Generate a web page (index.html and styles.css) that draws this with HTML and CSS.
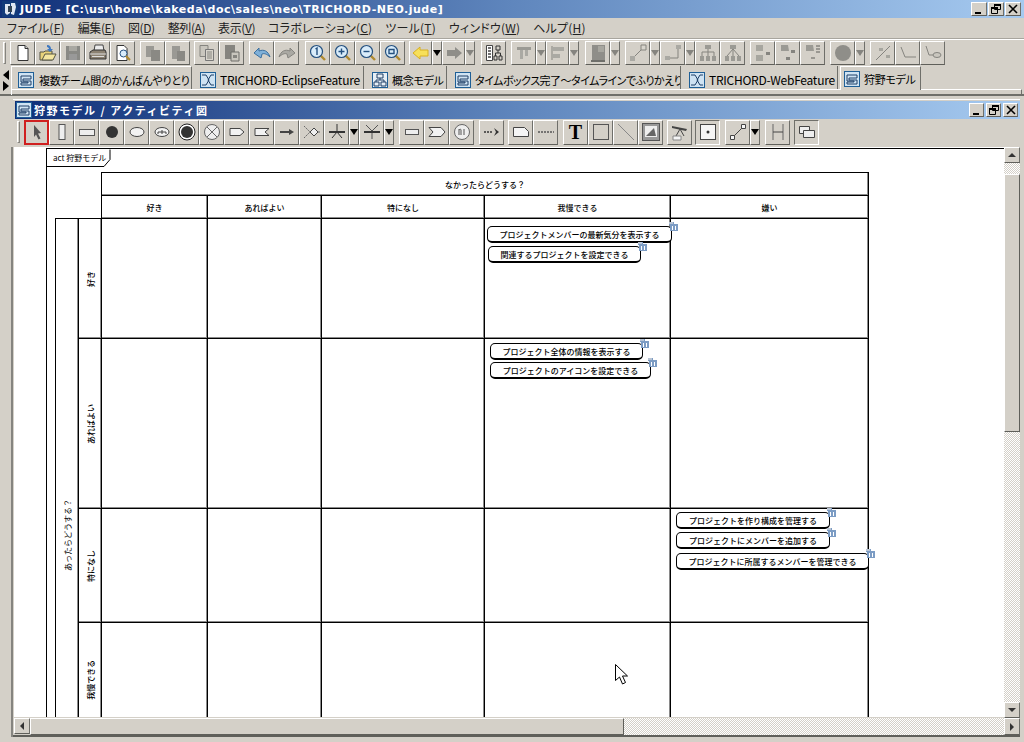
FILE: index.html
```html
<!DOCTYPE html>
<html lang="ja">

<head>
    <meta charset="UTF-8">
    <title>JUDE - [C:\usr\home\kakeda\doc\sales\neo\TRICHORD-NEO.jude]</title>
    <link rel="stylesheet" href="styles.css">
</head>

<body>
    <svg class="defs">
        <symbol id="tab-act" viewBox="0 0 16 16"><rect x=".5" y=".5" width="15" height="15" fill="#cfe3f3" stroke="#1f5f96"/><path d="M3 4h10v3H5v2h8v4H3v-2h7v-1H3z" fill="none" stroke="#1f3f66"/></symbol>
        <symbol id="tab-flow" viewBox="0 0 16 16"><rect x=".5" y=".5" width="15" height="15" fill="#cfe3f3" stroke="#1f5f96"/><path d="M2 3h4l3 5-3 5H2M14 3h-3L8 8l3 5h3" fill="none" stroke="#1f3f66"/></symbol>
        <symbol id="tab-cls" viewBox="0 0 16 16"><rect x=".5" y=".5" width="15" height="15" fill="#e6eff6" stroke="#1f5f96"/><path d="M5 2h6v4H5zM2 10h5v4H2zM9 10h5v4H9zM8 6v2M4 10V8h8v2" fill="none" stroke="#1f3f66"/></symbol>
        <symbol id="note" viewBox="0 0 9 9"><path d="M0 0h5v2h4v7H1V3H0z" fill="#7c9cc4"/><path d="M0 0h4v2H0z" fill="#b8c4d4"/><path d="M3 4h1v4H3zM6 4h1v4H6z" fill="#fff"/></symbol>
        <symbol id="glass" viewBox="0 0 18 18"><path d="M11 11l5 5" stroke="#b08a30" stroke-width="2.400"/><circle cx="7.500" cy="7.500" r="6" fill="#d9ecfa" stroke="#24507f" stroke-width="1.200"/></symbol>
    </svg>

    <header class="titlebar">
        <span class="app-icon"><svg viewBox="0 0 16 16"><rect width="16" height="16" fill="#123a7a"/><path d="M3 3h5v9l-3 2-2-2zM9 2h4l1 4-2 8-3-1z" fill="#dfe6f2"/><path d="M6 5h4v6H6z" fill="#345"/></svg></span>
        <h1>JUDE - [C:\usr\home\kakeda\doc\sales\neo\TRICHORD-NEO.jude]</h1>
        <div class="winbtns">
            <button class="winbtn"><svg viewBox="0 0 10 10"><path d="M1 8h6v2H1z"/></svg></button>
            <button class="winbtn"><svg viewBox="0 0 10 10"><path d="M3.500 .5h6v5h-6zM.5 3.500h6v6h-6z" fill="none" stroke="#000"/><path d="M3 0h7v2H3zM0 3h7v2H0z"/></svg></button>
            <button class="winbtn"><svg viewBox="0 0 10 10"><path d="M1 1l8 8M9 1l-8 8" stroke="#000" stroke-width="1.600"/></svg></button>
        </div>
    </header>

    <nav class="menubar">
        <span>ファイル(<u>F</u>)</span>
        <span class="k">編集(<u>E</u>)</span>
        <span class="k">図(<u>D</u>)</span>
        <span class="k">整列(<u>A</u>)</span>
        <span class="k">表示(<u>V</u>)</span>
        <span>コラボレーション(<u>C</u>)</span>
        <span>ツール(<u>T</u>)</span>
        <span>ウィンドウ(<u>W</u>)</span>
        <span>ヘルプ(<u>H</u>)</span>
    </nav>

    <!-- main toolbar -->
    <div class="toolbar main-tools">
        <i class="handle"></i>
        <button class="btn"><svg viewBox="0 0 18 18"><path d="M4 1.500h7l3 3v12H4z" fill="#fff" stroke="#333"/><path d="M11 1.500v3h3" fill="#ccc" stroke="#333"/></svg></button>
        <button class="btn"><svg viewBox="0 0 18 18"><path d="M1 8h4l1-1h7v9H1z" fill="#e8d27a" stroke="#554"/><path d="M3 16l3-6h11l-3 6z" fill="#f4e6a0" stroke="#554"/><path d="M8 1c3 0 4 2 4 4h2l-3 3-3-3h2c0-1-1-2-2-2z" fill="#3f78c0"/></svg></button>
        <button class="btn"><svg viewBox="0 0 18 18"><path d="M2 2h14v14H2z" fill="#8a8a86"/><path d="M5 2h8v5H5z" fill="#a9a8a2"/><path d="M5 10h8v6H5z" fill="#999"/></svg></button>
        <button class="btn"><svg viewBox="0 0 18 18"><path d="M6 1h8l1 6H5z" fill="#ececec" stroke="#444"/><path d="M1 8l3-2h12l1 2v7H1z" fill="#8c8272" stroke="#333"/><path d="M1 10h16M3 12.500h12" stroke="#ddd"/></svg></button>
        <button class="btn"><svg viewBox="0 0 18 18"><path d="M3 1.500h7l3 3v12H3z" fill="#fff" stroke="#333"/><circle cx="9.500" cy="9.500" r="3.500" fill="#d9ecfa" stroke="#24507f"/><path d="M12 12l4 4" stroke="#b08a30" stroke-width="2"/></svg></button>
        <button class="btn ml5"><svg viewBox="0 0 18 18"><path d="M2 2h8v11H2z" fill="#9a9994"/><path d="M7 6h9v11H7z" fill="#8a8984"/></svg></button>
        <button class="btn"><svg viewBox="0 0 18 18"><path d="M3 2h8v13H3z" fill="#9a9994"/><path d="M8 7h8v10H8z" fill="#8a8984"/></svg></button>
        <button class="btn ml4"><svg viewBox="0 0 18 18"><path d="M2 1.500h8v11H2z" fill="#c9c6be" stroke="#85847f"/><path d="M7.500 5.500h8v11h-8z" fill="#d8d5cd" stroke="#777"/><path d="M9 8h5M9 10h5M9 12h5M9 14h5" stroke="#85847f"/></svg></button>
        <button class="btn"><svg viewBox="0 0 18 18"><path d="M2 1h10v14H2z" fill="#85847f"/><path d="M8 8h8v9H8z" fill="#c9c6be" stroke="#6f6f6b"/><path d="M10 11h4v3h-4z" fill="#85847f"/></svg></button>
        <button class="btn ml5"><svg viewBox="0 0 18 18"><path d="M1 9l5-5v3c5-2 9 0 11 6-3-3-6-4-8-3l-1 4z" fill="#7fb0d8" stroke="#3a6f9f"/></svg></button>
        <button class="btn"><svg viewBox="0 0 18 18"><path d="M17 9l-5-5v3C7 5 3 7 1 13c3-3 6-4 8-3l1 4z" fill="#aaa9a3" stroke="#85847f"/></svg></button>
        <button class="btn ml6"><svg viewBox="0 0 18 18"><use href="#glass"/><path d="M6.500 5l1.500-1v7" fill="none" stroke="#24507f" stroke-width="1.400"/></svg></button>
        <button class="btn"><svg viewBox="0 0 18 18"><use href="#glass"/><path d="M4.500 7.500h6M7.500 4.500v6" stroke="#24507f" stroke-width="1.400"/></svg></button>
        <button class="btn"><svg viewBox="0 0 18 18"><use href="#glass"/><path d="M4.500 7.500h6" stroke="#24507f" stroke-width="1.400"/></svg></button>
        <button class="btn"><svg viewBox="0 0 18 18"><use href="#glass"/><path d="M5 5.500h5v4H5z" fill="none" stroke="#24507f" stroke-width="1.400"/></svg></button>
        <button class="btn w23 ml4"><svg viewBox="0 0 18 18"><path d="M1 9l7-6v3h8v6H8v3z" fill="#f7e05a" stroke="#d8b020"/></svg></button>
        <button class="dd"></button>
        <button class="btn w23"><svg viewBox="0 0 18 18"><path d="M17 9l-7-6v3H2v6h8v3z" fill="#8f8e89"/></svg></button>
        <button class="dd off"></button>
        <button class="btn ml6"><svg viewBox="0 0 18 18"><path d="M1.500 1.500h6v15h-6z" fill="#fff" stroke="#444"/><path d="M3 4h3M3 7h3M3 10h3M3 13h3" stroke="#444" stroke-width="1.500"/><path d="M11 2h4v4h-4zM9 12h3v4H9zM14 12h3v4h-3zM13 6v3M10.500 12V9h5v3" fill="none" stroke="#333"/></svg></button>
        <button class="btn ml5"><svg viewBox="0 0 18 18"><path d="M2 3h14v3H2z" fill="#9b9a94"/><path d="M5 6h3v9H5zM10 6h3v6h-3z" fill="#aaa9a3"/></svg></button>
        <button class="dd off"></button>
        <button class="btn w23"><svg viewBox="0 0 18 18"><path d="M3 2v14" stroke="#85847f"/><path d="M3 3h12v4H3zM3 10h8v4H3z" fill="#aaa9a3"/></svg></button>
        <button class="dd off"></button>
        <button class="btn ml6"><svg viewBox="0 0 18 18"><path d="M2 16h14v2H2z" fill="#6f6f6b"/><path d="M3 1h13v15H3z" fill="#8f8e89"/><path d="M9 2h6v6H9z" fill="#a7a69f"/></svg></button>
        <button class="dd off"></button>
        <button class="btn ml5"><svg viewBox="0 0 18 18"><path d="M3 15L15 3" stroke="#85847f"/><path d="M1 12h5v5H1z" fill="#aaa9a3"/><path d="M12 1h5v5h-5z" fill="#d8d5cd" stroke="#85847f"/></svg></button>
        <button class="dd off"></button>
        <button class="btn"><svg viewBox="0 0 18 18"><path d="M4 14h10V4" fill="none" stroke="#85847f"/><path d="M1 12h5v4H1z" fill="#aaa9a3"/><path d="M12 1h5v4h-5z" fill="#aaa9a3"/></svg></button>
        <button class="dd off"></button>
        <button class="btn"><svg viewBox="0 0 18 18"><path d="M6 1h6v4H6zM1 12h4v5H1zM7 12h4v5H7zM13 12h4v5h-4z" fill="#9b9a94"/><path d="M9 5v3M3 12V8h12v4M9 8v4" fill="none" stroke="#85847f"/></svg></button>
        <button class="btn"><svg viewBox="0 0 18 18"><path d="M6 1h6v4H6zM1 12h4v5H1zM7 12h4v5H7zM13 12h4v5h-4z" fill="#9b9a94"/><path d="M9 5L3 12M9 5v7M9 5l6 7" fill="none" stroke="#85847f"/></svg></button>
        <button class="btn ml5"><svg viewBox="0 0 18 18"><path d="M2 1h7v6H2zM2 11h7v6H2z" fill="#a7a69f"/><path d="M12 8h4v3h-4z" fill="#85847f"/></svg></button>
        <button class="btn"><svg viewBox="0 0 18 18"><path d="M2 1h7l1 6H2z" fill="#9b9a94"/><path d="M12 6h4v3h-4zM7 13h4v3H7z" fill="#85847f"/></svg></button>
        <button class="btn"><svg viewBox="0 0 18 18"><path d="M2 1h7l1 6H2z" fill="#9b9a94"/><path d="M12 2h4M12 5h4M12 8h4M7 14h4" stroke="#85847f" stroke-width="1.500"/></svg></button>
        <button class="btn ml5"><svg viewBox="0 0 18 18"><circle cx="9" cy="9" r="8" fill="#8f8e89"/></svg></button>
        <button class="dd off"></button>
        <button class="btn ml5"><svg viewBox="0 0 18 18"><path d="M2 16L16 2" stroke="#85847f"/><path d="M5 4h4v3H5zM12 11h4v3h-4z" fill="#a7a69f"/></svg></button>
        <button class="btn"><svg viewBox="0 0 18 18"><path d="M2 3l4 10h11" fill="none" stroke="#85847f"/></svg></button>
        <button class="btn"><svg viewBox="0 0 18 18"><path d="M2 2l3 9h7" fill="none" stroke="#85847f"/><ellipse cx="13" cy="11" rx="4" ry="2.500" fill="#c9c6be" stroke="#85847f"/></svg></button>
    </div>

    <!-- open diagram tabs -->
    <div class="tabstrip">
        <div class="scrollers"><i class="tri-left"></i><i class="tri-right"></i></div>
        <div class="tab t1"><svg><use href="#tab-act"/></svg>複数チーム間のかんばんやりとり</div>
        <div class="tab t2 latin"><svg><use href="#tab-flow"/></svg>TRICHORD-EclipseFeature</div>
        <div class="tab t3"><svg><use href="#tab-cls"/></svg>概念モデル</div>
        <div class="tab t4"><svg><use href="#tab-act"/></svg>タイムボックス完了～タイムラインでふりかえり</div>
        <div class="tab t5 latin"><svg><use href="#tab-flow"/></svg>TRICHORD-WebFeature</div>
        <div class="tab t6 active"><svg><use href="#tab-act"/></svg>狩野モデル</div>
    </div>

    <div class="frame">
        <div class="frame-title">
            <svg class="frame-icon"><use href="#tab-act"/></svg>
            <span>狩野モデル / アクティビティ図</span>
            <div class="winbtns">
                <button class="winbtn"><svg viewBox="0 0 10 10"><path d="M1 8h6v2H1z"/></svg></button>
                <button class="winbtn"><svg viewBox="0 0 10 10"><path d="M3.500 .5h6v5h-6zM.5 3.500h6v6h-6z" fill="none" stroke="#000"/><path d="M3 0h7v2H3zM0 3h7v2H0z"/></svg></button>
                <button class="winbtn"><svg viewBox="0 0 10 10"><path d="M1 1l8 8M9 1l-8 8" stroke="#000" stroke-width="1.600"/></svg></button>
            </div>
        </div>

        <!-- diagram palette -->
        <div class="toolbar palette">
            <i class="handle"></i>
            <button class="btn current"><svg viewBox="0 0 18 18"><path d="M6 2l7 8-3 .5 2.500 5-2 1-2.500-5-2 2.500z" fill="#555"/></svg></button>
            <button class="btn"><svg viewBox="0 0 18 18"><rect x="6" y="1.500" width="6" height="15" fill="#eee" stroke="#555"/></svg></button>
            <button class="btn"><svg viewBox="0 0 18 18"><rect x="1.500" y="6.500" width="15" height="6" fill="#eee" stroke="#555"/></svg></button>
            <button class="btn"><svg viewBox="0 0 18 18"><circle cx="9" cy="9" r="6" fill="#333"/></svg></button>
            <button class="btn"><svg viewBox="0 0 18 18"><ellipse cx="9" cy="9" rx="7" ry="4.500" fill="#f2f2f2" stroke="#444"/></svg></button>
            <button class="btn"><svg viewBox="0 0 18 18"><ellipse cx="9" cy="9" rx="7" ry="4.500" fill="#f2f2f2" stroke="#444"/><path d="M5 11V9h8v2M9 7v4" fill="none" stroke="#444"/></svg></button>
            <button class="btn"><svg viewBox="0 0 18 18"><circle cx="9" cy="9" r="8" fill="#fff" stroke="#222"/><circle cx="9" cy="9" r="6" fill="#333"/></svg></button>
            <button class="btn"><svg viewBox="0 0 18 18"><circle cx="9" cy="9" r="7.500" fill="#eee" stroke="#666"/><path d="M4 4l10 10M14 4L4 14" stroke="#666"/></svg></button>
            <button class="btn"><svg viewBox="0 0 18 18"><path d="M2 5.500h10l4 3.500-4 3.500H2z" fill="#f2f2f2" stroke="#444"/></svg></button>
            <button class="btn"><svg viewBox="0 0 18 18"><path d="M2 5.500h14l-4 3.500 4 3.500H2z" fill="#f2f2f2" stroke="#444"/></svg></button>
            <button class="btn"><svg viewBox="0 0 18 18"><path d="M2 9h10" stroke="#444" stroke-width="2"/><path d="M11 6l5 3-5 3z" fill="#444"/></svg></button>
            <button class="btn"><svg viewBox="0 0 18 18"><path d="M7 9l4-4 4 4-4 4z" fill="#eee" stroke="#444"/><path d="M1 3l6 6-6 6M15 9h3" fill="none" stroke="#666" stroke-dasharray="2 1"/></svg></button>
            <button class="btn"><svg viewBox="0 0 18 18"><path d="M9 1v8M9 9l-5 6M9 9l5 6" fill="none" stroke="#333"/><path d="M1 8h16v2H1z" fill="#333"/></svg></button>
            <button class="dd"></button>
            <button class="btn"><svg viewBox="0 0 18 18"><path d="M1 8h16v2H1z" fill="#333"/><path d="M3 2l6 6 6-6M9 10v6" fill="none" stroke="#555"/></svg></button>
            <button class="dd"></button>
            <button class="btn ml5"><svg viewBox="0 0 18 18"><rect x="2.500" y="6.500" width="13" height="5" fill="#eee" stroke="#555"/></svg></button>
            <button class="btn"><svg viewBox="0 0 18 18"><path d="M1 4.500h12l4 4.500-4 4.500H1l4-4.500z" fill="#f2f2f2" stroke="#444"/></svg></button>
            <button class="btn"><svg viewBox="0 0 18 18"><circle cx="9" cy="9" r="7.500" fill="#eee" stroke="#666"/><path d="M6 6v6M6 7c1-1 2-1 2 0v5M11 6v6" fill="none" stroke="#555"/></svg></button>
            <button class="btn ml5"><svg viewBox="0 0 18 18"><path d="M1 9h8" stroke="#333" stroke-dasharray="2 1" stroke-width="1.500"/><path d="M11 5l5 4-5 4 2-4z" fill="#333"/></svg></button>
            <button class="btn ml4"><svg viewBox="0 0 18 18"><path d="M1.500 4.500h11l4 4v5h-15z" fill="#f5f5f5" stroke="#444"/></svg></button>
            <button class="btn"><svg viewBox="0 0 18 18"><path d="M1 9h16" stroke="#555" stroke-width="1.500" stroke-dasharray="2 1"/></svg></button>
            <button class="btn ml5 text-tool">T</button>
            <button class="btn"><svg viewBox="0 0 18 18"><rect x="1.500" y="1.500" width="15" height="15" fill="none" stroke="#555"/></svg></button>
            <button class="btn"><svg viewBox="0 0 18 18"><path d="M1 1l16 16" stroke="#888"/></svg></button>
            <button class="btn"><svg viewBox="0 0 18 18"><rect x=".5" y=".5" width="17" height="17" fill="#999" stroke="#555"/><rect x="3" y="3" width="12" height="11" fill="#eee"/><path d="M4 13l8-8 2 8z" fill="#666"/></svg></button>
            <button class="btn ml4"><svg viewBox="0 0 18 18"><path d="M1 3l15 3-1 2L1 5z" fill="#444"/><path d="M9 6l-4 7M9 6l4 7" stroke="#444"/><path d="M2 13h8v4H2z" fill="#f5f5f5" stroke="#888"/></svg></button>
            <button class="btn toggled ml3"><svg viewBox="0 0 18 18"><rect x="1.500" y="1.500" width="15" height="15" fill="#f5f5f5" stroke="#444"/><circle cx="9" cy="9" r="1.500" fill="#333"/></svg></button>
            <button class="btn ml5"><svg viewBox="0 0 18 18"><path d="M4 14L14 4" stroke="#444"/><path d="M1.500 12.500h4v4h-4zM12.500 1.500h4v4h-4z" fill="#f5f5f5" stroke="#444"/></svg></button>
            <button class="dd"></button>
            <button class="btn ml5"><svg viewBox="0 0 18 18"><path d="M4 1v16M14 1v16" stroke="#666"/><path d="M4 9h10" stroke="#444"/></svg></button>
            <button class="btn toggled ml4"><svg viewBox="0 0 18 18"><path d="M1.500 3.500h10v7h-10z" fill="#eee" stroke="#444"/><path d="M5.500 7.500h11v7h-11z" fill="#eee" stroke="#444"/></svg></button>
        </div>

        <div class="work">
            <div class="canvas">
                <div class="uml-frame"></div>
                <div class="uml-label">
                    <svg viewBox="0 0 65 18"><path d="M0 17.500h58l6-7V.5" fill="#fff" stroke="#000"/></svg>
                    <span>act 狩野モデル</span>
                </div>

                <div class="matrix">
                    <div class="corner"></div>
                    <div class="cell col-title">なかったらどうする？</div>
                    <div class="cell">好き</div>
                    <div class="cell">あればよい</div>
                    <div class="cell">特になし</div>
                    <div class="cell">我慢できる</div>
                    <div class="cell">嫌い</div>

                    <div class="cell side"><span class="vtext light">あったらどうする？</span></div>

                    <div class="cell"><span class="vtext">好き</span></div>
                    <div class="cell"></div><div class="cell"></div><div class="cell"></div><div class="cell"></div><div class="cell"></div>
                    <div class="cell"><span class="vtext">あればよい</span></div>
                    <div class="cell"></div><div class="cell"></div><div class="cell"></div><div class="cell"></div><div class="cell"></div>
                    <div class="cell"><span class="vtext">特になし</span></div>
                    <div class="cell"></div><div class="cell"></div><div class="cell"></div><div class="cell"></div><div class="cell"></div>
                    <div class="cell"><span class="vtext">我慢できる</span></div>
                    <div class="cell"></div><div class="cell"></div><div class="cell"></div><div class="cell"></div><div class="cell"></div>
                    <div class="cell"></div>
                    <div class="cell"></div><div class="cell"></div><div class="cell"></div><div class="cell"></div><div class="cell"></div>
                </div>

                <div class="action a1">プロジェクトメンバーの最新気分を表示する<svg><use href="#note"/></svg></div>
                <div class="action a2">関連するプロジェクトを設定できる<svg><use href="#note"/></svg></div>
                <div class="action a3">プロジェクト全体の情報を表示する<svg><use href="#note"/></svg></div>
                <div class="action a4">プロジェクトのアイコンを設定できる<svg><use href="#note"/></svg></div>
                <div class="action a5">プロジェクトを作り構成を管理する<svg><use href="#note"/></svg></div>
                <div class="action a6">プロジェクトにメンバーを追加する<svg><use href="#note"/></svg></div>
                <div class="action a7">プロジェクトに所属するメンバーを管理できる<svg><use href="#note"/></svg></div>

                <svg class="cursor" viewBox="0 0 13 21"><path d="M.5.5v16l4-3.500 3 7 3-1.500-3-6.500h5z" fill="#fff" stroke="#000"/></svg>
            </div>

            <div class="vscroll">
                <button class="sbtn"><i class="arrow up"></i></button>
                <div class="track short"></div>
                <div class="thumb"></div>
                <div class="track"></div>
                <button class="sbtn"><i class="arrow down"></i></button>
            </div>

            <div class="hscroll">
                <button class="sbtn"><i class="arrow left"></i></button>
                <div class="thumb"></div>
                <div class="track"></div>
            </div>
            <button class="sbtn corner-btn"><i class="arrow right"></i></button>
        </div>
    </div>
</body>

</html>
```

FILE: styles.css
```css
* {
    box-sizing: border-box;
}

html,
body {
    margin: 0;
    height: 742px;
    overflow: hidden;
}

body {
    width: 1024px;
    background-color: #d4d0c8;
    font-family: "Noto Sans CJK JP", "Liberation Sans", sans-serif;
    font-size: 12px;
    color: #000;
    position: relative;
}

button {
    margin: 0;
    padding: 0;
    font: inherit;
    display: flex;
    align-items: center;
    justify-content: center;
    background-color: #d4d0c8;
    border: 1px solid;
    border-color: #fff #6f6f6a #5f5f5a #fff;
}

.defs {
    position: absolute;
    width: 0;
    height: 0;
}

/* window title */
.titlebar {
    height: 18px;
    display: flex;
    align-items: center;
    padding: 0 3px 0 2px;
    background: linear-gradient(to right, #0f2f78, #5f86bd 50%, #a6caf0);
}

.app-icon {
    width: 16px;
    height: 16px;
    margin-right: 2px;
}

.app-icon svg {
    display: block;
    width: 16px;
    height: 16px;
}

.titlebar h1 {
    margin: 0;
    font-family: "DejaVu Sans", sans-serif;
    font-size: 11px;
    font-weight: bold;
    letter-spacing: .5px;
    color: #fff;
    white-space: nowrap;
}

.winbtns {
    margin-left: auto;
    display: flex;
    gap: 1px;
}

.winbtn {
    width: 16px;
    height: 14px;
}

.winbtn svg {
    width: 10px;
    height: 10px;
}

/* menu */
.menubar {
    height: 21px;
    display: flex;
    align-items: center;
    gap: 13px;
    padding: 0 0 2px 7px;
    border-bottom: 1px solid #a8a59e;
    font-size: 12px;
    font-feature-settings: "palt";
    white-space: nowrap;
    color: #222;
}

.menubar span.k {
    letter-spacing: -.4px;
}

.menubar span {
    letter-spacing: .2px;
}

/* toolbars */
.toolbar {
    display: flex;
    align-items: center;
}

.main-tools {
    height: 26px;
    padding-left: 3px;
    border-top: 1px solid #fff;
}

.handle {
    width: 3px;
    height: 22px;
    margin-right: 4px;
    border: 1px solid;
    border-color: #fff #85847f #85847f #fff;
}

.btn {
    flex: none;
    width: 25px;
    height: 24px;
}

.btn svg {
    width: 18px;
    height: 18px;
}

.w23 {
    width: 23px;
}

.dd {
    flex: none;
    width: 10px;
    height: 24px;
}

.dd::after {
    content: "";
    border: 4px solid transparent;
    border-top: 6px solid #000;
    border-bottom: 0;
}

.dd.off::after {
    border-top-color: #85847f;
}

.ml3 {
    margin-left: 3px;
}

.ml4 {
    margin-left: 4px;
}

.ml5 {
    margin-left: 5px;
}

.ml6 {
    margin-left: 6px;
}

/* tabs */
.tabstrip {
    height: 31px;
    display: flex;
    align-items: flex-start;
    padding: 1px 0 0 11px;
    position: relative;
    border-bottom: 2px solid #6f6f6a;
}

.tabstrip::after {
    content: "";
    position: absolute;
    left: 11px;
    right: 2px;
    top: 24px;
    height: 5px;
    border: 1px solid;
    border-color: #fff #6f6f6a transparent #fff;
    border-bottom: 0;
}

.scrollers {
    position: absolute;
    left: 3px;
    top: 5px;
}

.scrollers i {
    display: block;
    width: 0;
    height: 0;
    border: 5px solid transparent;
    border-left-width: 0;
    border-right: 6px solid #000;
}

.scrollers .tri-right {
    border-left: 6px solid #000;
    border-right-width: 0;
    margin-top: 1px;
}

.tab {
    height: 23px;
    display: flex;
    align-items: center;
    flex: none;
    padding: 4px 0 0 6px;
    font-size: 11px;
    letter-spacing: -.3px;
    font-feature-settings: "palt";
    white-space: nowrap;
    overflow: hidden;
    border-right: 1px solid #6f6f6a;
    margin-right: 2px;
}

.tab.latin {
    font-size: 12px;
    letter-spacing: -.25px;
}

.tab svg {
    width: 16px;
    height: 16px;
    flex: none;
    margin-right: 4px;
}

.t1 {
    width: 181px;
    border-left: 1px solid #fff;
    border-top: 1px solid #fff;
    padding-left: 6px;
}

.t1 svg {
    margin-right: 5px;
}

.t2 {
    width: 170px;
}

.t3 {
    width: 81px;
}

.t4 {
    width: 232px;
    letter-spacing: -.5px;
}

.t5 {
    width: 155px;
}

.t6 {
    width: 81px;
}

.tab.active {
    position: relative;
    z-index: 1;
    height: 24px;
    padding: 0 0 0 3px;
    background-color: #d4d0c8;
    border-top: 1px solid #fff;
    border-left: 1px solid #fff;
}

/* inner diagram window */
.frame {
    margin: 3px 0 0 13px;
    width: 1007px;
    height: 638px;
    border-top: 1px solid #fff;
}

.frame-title {
    height: 18px;
    display: flex;
    align-items: center;
    padding: 0 2px 0 1px;
    margin: 1px 0 0 2px;
    color: #fff;
    font-size: 11px;
    font-weight: bold;
    letter-spacing: 1.500px;
    white-space: nowrap;
    background: linear-gradient(to right, #0f2f78, #5f86bd 50%, #a6caf0);
}

.frame-icon {
    width: 16px;
    height: 16px;
    margin-right: 2px;
}

.frame-title .winbtns {
    gap: 2px;
}

.frame-title .winbtn {
    width: 15px;
}

.palette {
    height: 28px;
    padding: 1px 0 3px 4px;
}

.palette .btn {
    height: 25px;
}

.palette .dd {
    height: 25px;
}

.palette .handle {
    margin-right: 4px;
}

.btn.current {
    outline: 2px solid #d02020;
    outline-offset: -2px;
}

.btn.toggled {
    border-color: #6f6f6a #fff #fff #6f6f6a;
}

.text-tool {
    font-family: "Liberation Serif", serif;
    font-size: 20px;
    font-weight: bold;
}

/* drawing area + scrollbars */
.work {
    display: grid;
    grid-template-columns: 991px 16px;
    grid-template-rows: 571px 17px;
    border-bottom: 2px solid #5f5f5a;
    box-shadow: -2px 0 0 #85847f;
}

.canvas {
    position: relative;
    overflow: hidden;
    background-color: #fff;
    border-left: 1px solid #d4d0c8;
    border-bottom: 1px solid #d4d0c8;
}

.vscroll {
    display: flex;
    flex-direction: column;
}

.hscroll {
    display: flex;
    padding-left: 1px;
}

.sbtn {
    width: 16px;
    height: 16px;
    flex: none;
}

.corner-btn {
    height: 17px;
}

.track {
    flex: 1;
    background: repeating-conic-gradient(#d4d0c8 0 25%, #fff 0 50%) 0 0 / 2px 2px;
}

.track.short {
    flex: none;
    height: 11px;
}

.thumb {
    flex: none;
    background-color: #d4d0c8;
    border: 1px solid;
    border-color: #fff #5f5f5a #5f5f5a #fff;
}

.vscroll .thumb {
    height: 258px;
}

.hscroll .thumb {
    width: 594px;
}

.arrow {
    width: 0;
    height: 0;
    border: 4px solid transparent;
}

.arrow.up {
    border-top: 0;
    border-bottom: 4px solid #333;
}

.arrow.down {
    border-bottom: 0;
    border-top: 4px solid #333;
}

.arrow.left {
    border-left: 0;
    border-right: 4px solid #333;
}

.arrow.right {
    border-right: 0;
    border-left: 4px solid #333;
}

/* diagram */
.uml-frame {
    position: absolute;
    left: 32px;
    top: 1px;
    width: 1400px;
    height: 1000px;
    border: 1px solid #000;
}

.uml-label {
    position: absolute;
    left: 32px;
    top: 2px;
    width: 65px;
    height: 18px;
    font-size: 8px;
    line-height: 18px;
    padding-left: 7px;
    white-space: nowrap;
}

.uml-label svg {
    position: absolute;
    left: 0;
    top: 0;
    width: 65px;
    height: 18px;
}

.uml-label span {
    position: relative;
}

.matrix {
    position: absolute;
    left: 41px;
    top: 25px;
    display: grid;
    grid-template-columns: 23px 23px 106px 114px 163px 186px 198px;
    grid-template-rows: 23px 23px 120px 170px 114px 114px 114px;
    font-size: 8px;
}

.cell {
    display: flex;
    align-items: center;
    justify-content: center;
    margin: 0 -1px -1px 0;
    border: 1px solid #000;
    box-shadow: inset -1px -1px 0 #8a8a8a;
    font-weight: 500;
    white-space: nowrap;
}

.corner {
    grid-column: 1 / 3;
    grid-row: 1 / 3;
}

.col-title {
    grid-column: 3 / 8;
    grid-row: 1;
}

.cell:nth-child(3) {
    grid-column: 3;
}

.side {
    grid-column: 1;
    grid-row: 3 / 8;
}

.vtext {
    writing-mode: vertical-rl;
    text-orientation: sideways;
    transform: rotate(180deg);
}

.vtext.light {
    font-weight: 400;
}

.action {
    position: absolute;
    height: 17px;
    display: flex;
    align-items: center;
    justify-content: center;
    background-color: #fff;
    border: 1px solid #000;
    border-bottom-width: 2px;
    border-radius: 5px;
    font-size: 8px;
    font-weight: 500;
    white-space: nowrap;
}

.action svg {
    position: absolute;
    right: -7px;
    top: -5px;
    width: 9px;
    height: 9px;
}

.a1 {
    left: 473px;
    top: 79px;
    width: 185px;
}

.a2 {
    left: 474px;
    top: 99px;
    width: 153px;
}

.a3 {
    left: 476px;
    top: 196px;
    width: 153px;
}

.a4 {
    left: 476px;
    top: 215px;
    width: 161px;
}

.a5 {
    left: 662px;
    top: 365px;
    width: 154px;
}

.a6 {
    left: 662px;
    top: 385px;
    width: 154px;
}

.a7 {
    left: 662px;
    top: 406px;
    width: 193px;
}

.cursor {
    position: absolute;
    left: 601px;
    top: 517px;
    width: 13px;
    height: 21px;
}
```
